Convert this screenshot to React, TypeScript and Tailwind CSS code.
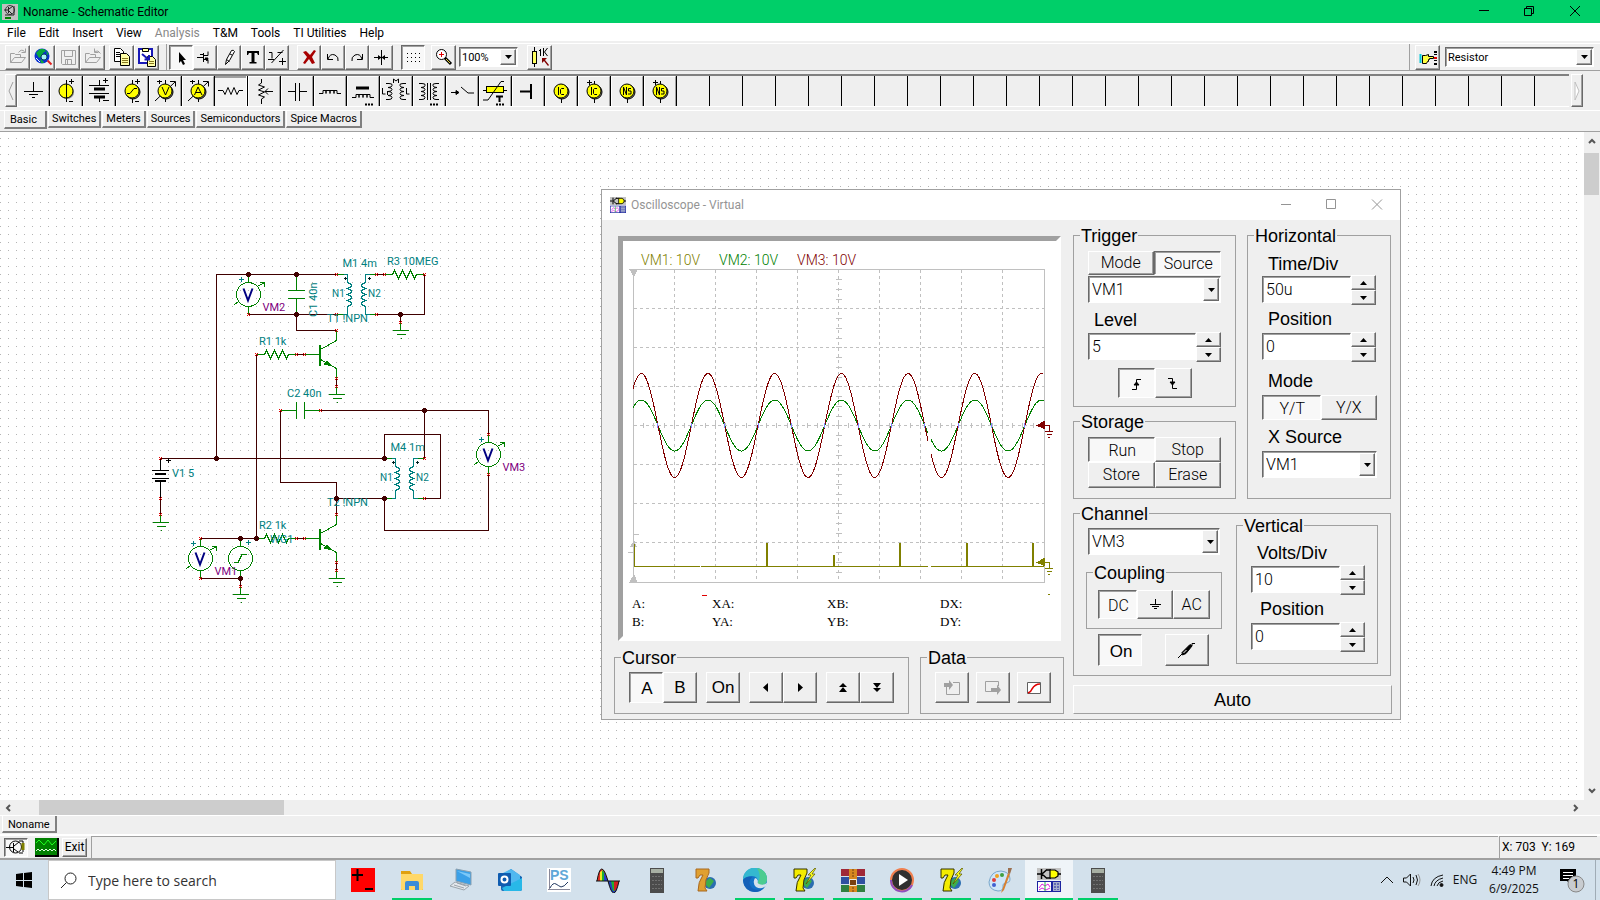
import React, { useState } from "react";
import clsx from "clsx";

const RAISED =
  "border border-t-white border-l-white border-b-[#696969] border-r-[#696969] bg-[#efefef] shadow-[inset_-1px_-1px_0_#a0a0a0]";
const PRESSED =
  "border border-t-[#696969] border-l-[#696969] border-b-white border-r-white bg-[#f8f8f8] shadow-[inset_1px_1px_0_#a0a0a0]";
const SUNKEN =
  "border border-t-[#696969] border-l-[#696969] border-b-white border-r-white bg-white shadow-[inset_1px_1px_0_#a0a0a0]";

/* ---------- main toolbar ---------- */

type Tool = { name: string; icon: React.ReactNode; pressed?: boolean };

const OpenIcon = ({ arrow }: { arrow: string }) => (
  <g fill="none" stroke="#a0a0a0">
    <path d="M4.500 17.500V8.500h4l1 1h5v3M4.500 17.500l4-5h11l-4 5z" />
    <path d={arrow} />
  </g>
);

const fileTools: Tool[] = [
  { name: "Open", icon: <OpenIcon arrow="M12.500 7.500q3-4 6-1M19.500 3.500v4h-4" /> },
  {
    name: "Open from web",
    icon: (
      <g>
        <circle cx="11" cy="11" r="7.500" fill="#0a30d0" />
        <path d="M5 8l4-4 4 0 2 2-3 2-1 3-3 2zM9 14l3 2 1 2-3 0zM15 5l3 4-2 1z" fill="#08a83c" />
        <circle cx="13" cy="12" r="3" fill="#a8f0f4" stroke="#0a4060" />
        <path d="M5 13l4 4" stroke="#e8f4ff" />
        <path d="M16.500 15.500l4 4" stroke="#e02020" strokeWidth="2" />
      </g>
    ),
  },
  {
    name: "Save",
    icon: (
      <g fill="none" stroke="#a0a0a0">
        <path d="M5.500 5.500h14v14h-13l-1-1zM8.500 5.500v6h8v-6M9.500 19.500v-5h6v5M11.500 15v4" />
      </g>
    ),
  },
  { name: "Close", icon: <OpenIcon arrow="M19.500 8.500q-2-4-6-2M13.500 3.500v4h4" /> },
];

const clipTools: Tool[] = [
  {
    name: "Copy",
    icon: (
      <g>
        <path d="M4.500 3.500h6l3 3v10h-9z" fill="#fff" stroke="#000" />
        <path d="M6 7.500h4M6 9.500h5M6 11.500h4" stroke="#000" />
        <path d="M10.500 8.500h6l3 3v9h-9z" fill="#ffffa8" stroke="#000" />
        <path d="M12 13.500h6M12 15.500h6M12 17.500h6" stroke="#8a7a20" />
      </g>
    ),
  },
  {
    name: "Paste",
    icon: (
      <g>
        <path d="M4 4h13v14H4z" fill="#fff" stroke="#1818b8" strokeWidth="2" />
        <path d="M7.500 3.500h6v3h-6z" fill="#ffffa8" stroke="#000" />
        <path d="M12.500 11.500h5l3 3v7h-8z" fill="#ffffa8" stroke="#000" />
        <path d="M14 16.500h5M14 18.500h5" stroke="#8a7a20" />
        <path d="M7 9l6 5M14 10v4.500h-4.500" fill="none" stroke="#1818b8" strokeWidth="2" />
      </g>
    ),
  },
];

const drawTools: Tool[] = [
  {
    name: "Select",
    pressed: true,
    icon: <path d="M10 7v11l2-2 2 4 2-1-2-4h3z" fill="#000" />,
  },
  {
    name: "Last component",
    icon: (
      <g fill="none" stroke="#000">
        <path d="M4 12.500h6M7 9.500h3M10.500 8v9M11 10.500h4v-4M11 14.500h4v4" />
        <path d="M12 13l3 0-1 3z" fill="#000" />
      </g>
    ),
  },
  {
    name: "Wire",
    icon: <path d="M8.500 19.500l1-5 5-9q2-1 3 1l-5 9zM9.500 14.500l3 2M13 9l2 1" fill="#fff" stroke="#000" />,
  },
  {
    name: "Text",
    icon: <path d="M6 6h12v4h-1l-1-2h-2.500v9h2v1.500h-7V17h2V8H8l-1 2H6z" fill="#000" />,
  },
  {
    name: "Output",
    icon: <path d="M4 7.500h3v6M18.500 5l-12 13M12.500 7.500h5M14 16.500h7M17.500 13v7M3 14.500h6" fill="none" stroke="#000" />,
  },
];

const editTools: Tool[] = [
  {
    name: "Delete",
    icon: <path d="M6 7l3-1 4 4 4-5 2 1-4 6 3 6-3 1-3-5-4 5-2-1 4-6z" fill="#a80000" />,
  },
  {
    name: "Undo",
    icon: <path d="M6.500 9v5.500h5.500M7 14q2-6 7-4 4 2 3 6" fill="none" stroke="#000" />,
  },
  {
    name: "Redo",
    icon: <path d="M17.500 9v5.500h-5.500M17 14q-2-6-7-4-4 2-3 6" fill="none" stroke="#000" />,
  },
  {
    name: "Center",
    icon: (
      <g>
        <path d="M5 12.500h14M12.500 5v15" stroke="#000" />
        <path d="M9 10v5l3.500-2.500zM16 10v5l-3.500-2.500z" fill="#000" />
      </g>
    ),
  },
];

const gridTool: Tool = {
  name: "Grid",
  pressed: true,
  icon: (
    <g fill="none" stroke="#000" strokeDasharray="1 3">
      <path d="M6 8.500h15M6 12.500h15M6 16.500h15" />
    </g>
  ),
};

const zoomTool: Tool = {
  name: "Zoom in",
  icon: (
    <g>
      <circle cx="9.500" cy="9.500" r="5" fill="#fff" stroke="#000" />
      <path d="M9.500 7v5M7 9.500h5" stroke="#e00000" />
      <path d="M13 13l6 6" stroke="#000" strokeWidth="3" />
      <path d="M14 14l4 4" stroke="#e8d840" />
    </g>
  ),
};

const valueTool: Tool = {
  name: "Show values",
  icon: (
    <g>
      <path d="M6.500 2v20" stroke="#000" />
      <rect x="4.500" y="6.500" width="4" height="12" fill="#ffff60" stroke="#000" />
      <path d="M12.500 4v7M11 5.500h1M15.500 3v8M19.500 3l-3 4 3 4" fill="none" stroke="#000" />
      <path d="M14 13h5l-2 2 4 5-1 1-4-5-2 2z" fill="#800000" />
    </g>
  ),
};

const handTool: Tool = {
  name: "Component pointer",
  icon: (
    <g>
      <path d="M4.500 9v9" stroke="#00c8d8" strokeWidth="2" />
      <path d="M6.500 10.500h3l3-1v2h5v2h-4v1h-1v2h-1l-1 2h-4z" fill="#ffff40" stroke="#000" />
      <path d="M18 6h3v2h-3zM18 18h3v2h-3zM18 9h3v1h-3zM18 15h3v1h-3z" fill="#000" />
      <path d="M18 12h3v2h-3z" fill="#e00000" />
    </g>
  ),
};

const ToolButton = ({ tool, wide }: { tool: Tool; wide?: boolean }) => (
  <button
    aria-label={tool.name}
    className={clsx("flex h-[25px] items-center justify-center", wide ? "w-[25px]" : "w-6", tool.pressed ? PRESSED : RAISED)}
  >
    <svg width="22" height="22" viewBox="1 1 22 22" className="shrink-0">
      {tool.icon}
    </svg>
  </button>
);

/* ---------- component bar ---------- */

const Ball = ({ children, y = 15 }: { children?: React.ReactNode; y?: number }) => (
  <g>
    <circle cx="17" cy={y + 1} r="7" fill="#888" />
    <circle cx="16" cy={y} r="7" fill="#ffff00" stroke="#000" />
    {children}
  </g>
);

const Meter = ({ d }: { d: string }) => (
  <g fill="none" stroke="#000">
    <path d="M16.500 4v4M16.500 22v4M6 25l20-19M21 5.500h5.500v5M8 5.500h5M10.500 4v4" />
    <Ball>
      <path d={d} />
    </Ball>
  </g>
);

const MarkBall = ({ d, plus }: { d: string; plus?: boolean }) => (
  <g fill="none" stroke="#000">
    <path d="M16.500 20v7" />
    {plus && <path d="M16.500 5v4M9 6.500h5M11.500 4v5" />}
    <Ball>
      <path d={d} />
    </Ball>
  </g>
);

const components: { name: string; icon: React.ReactNode }[] = [
  { name: "Ground", icon: <path d="M16.500 6v9M7 15.500h19M12 18.500h9M15 21.500h3" stroke="#000" fill="none" /> },
  {
    name: "Current source",
    icon: (
      <g>
        <Ball />
        <path d="M16.500 4v22M19 5.500h5M21.500 3v5M19 25.500h4" stroke="#000" fill="none" />
      </g>
    ),
  },
  {
    name: "Battery",
    icon: (
      <g stroke="#000" fill="none">
        <path d="M16.500 4v5M6 9.500h20M6 17.500h20M16.500 21v5M20 4.500h5M22.500 2v5M20 24.500h6" />
        <path d="M11 13h11M11 21h11" strokeWidth="3" />
      </g>
    ),
  },
  {
    name: "Voltage generator",
    icon: (
      <g stroke="#000" fill="none">
        <path d="M16.500 4v4M16.500 22v5M19 5.500h5M21.500 3v5M19 25.500h4" />
        <Ball>
          <path d="M11 17.500h3l4-5h3" />
        </Ball>
      </g>
    ),
  },
  { name: "Voltmeter", icon: <Meter d="M13 11l3.500 8L20 11" /> },
  { name: "Ammeter", icon: <Meter d="M12.500 19l3.500-8 4 8M14 16.500h5" /> },
  { name: "Resistor", icon: <path d="M4 15.500h5l2 4 3-7 3 7 3-7 3 7 2-4h4" stroke="#000" fill="none" /> },
  { name: "Potentiometer", icon: <path d="M13.500 3v4l-3 2 6 2-6 3 6 2-6 3 6 2-3 2v5M25 15.500h-8M20 12.500l-3 3 3 3" stroke="#000" fill="none" /> },
  { name: "Capacitor", icon: <path d="M7 15.500h7M14.500 7v18M18.500 7v18M19 15.500h7" stroke="#000" fill="none" /> },
  { name: "Inductor", icon: <path d="M5 17.500h4v-3h3v3v-3h4v3v-3h4v3v-3h3v3h4" stroke="#000" fill="none" /> },
  {
    name: "Iron core coil",
    icon: (
      <g stroke="#000" fill="none">
        <path d="M5 21.500h4v-3h3v3v-3h4v3v-3h4v3v-3h3v3h4" />
        <path d="M18 28.500h8" strokeDasharray="2 1" strokeWidth="2" />
        <path d="M9 12h13" strokeWidth="3" />
      </g>
    ),
  },
  {
    name: "Coupled inductors",
    icon: (
      <g stroke="#000" fill="none">
        <path d="M6 7.500h3q4 0 3 2 0 2-4 2 4 0 4 2t-4 2q4 0 4 2t-4 2q4 0 4 2t-3 2H6" />
        <path d="M26 7.500h-3q-4 0-3 2 0 2 4 2-4 0-4 2t4 2q-4 0-4 2t4 2q-4 0-4 2t3 2h3" />
        <path d="M13.500 7V3l2.500 2 2.500-2v4M2.500 12v6h3M26.500 12v6h3M7.500 15v4" />
      </g>
    ),
  },
  {
    name: "Transformer",
    icon: (
      <g stroke="#000" fill="none">
        <path d="M6 7.500h3q4 0 3 2 0 2-4 2 4 0 4 2t-4 2q4 0 4 2t-4 2q4 0 4 2t-3 2H6" />
        <path d="M26 7.500h-3q-4 0-3 2 0 2 4 2-4 0-4 2t4 2q-4 0-4 2t4 2q-4 0-4 2t3 2h3M14.500 7v17M17.500 7v17" />
        <path d="M17 28.500h8" strokeDasharray="2 1" strokeWidth="2" />
      </g>
    ),
  },
  {
    name: "Switch",
    icon: (
      <g stroke="#000" fill="none">
        <path d="M5 16.500h7M15 11l7 6h6" />
        <path d="M10 14.500l3 2-3 2z" fill="#000" />
      </g>
    ),
  },
  {
    name: "Thermistor",
    icon: (
      <g stroke="#000" fill="none">
        <path d="M4 14.500h24" />
        <rect x="7.500" y="10.500" width="17" height="6" fill="#ffff00" />
        <path d="M4 24h5L22 5.500h3" />
        <path d="M17 20.500h7M20.500 20v6" strokeWidth="2" />
        <path d="M17 28.500h8" strokeDasharray="2 1" strokeWidth="2" />
      </g>
    ),
  },
  { name: "Terminal", icon: <path d="M8 15.500h10M19 8v15" stroke="#000" strokeWidth="2" fill="none" /> },
  { name: "Initial condition", icon: <MarkBall d="M13.500 11v8M19 12.500h-2.500l-1 1v4l1 1H19" /> },
  { name: "Initial condition +", icon: <MarkBall plus d="M13.500 11v8M19 12.500h-2.500l-1 1v4l1 1H19" /> },
  { name: "Nodeset", icon: <MarkBall d="M12.500 19v-8l3 8v-8M20 12.500h-2.500v2.500h2.500v3h-3" /> },
  { name: "Nodeset +", icon: <MarkBall plus d="M12.500 19v-8l3 8v-8M20 12.500h-2.500v2.500h2.500v3h-3" /> },
];

const componentTabs = ["Basic", "Switches", "Meters", "Sources", "Semiconductors", "Spice Macros"];

/* ---------- schematic parts ---------- */

const WIRE = "#400000";
const GREEN = "#008000";
const TEAL = "#008080";

const Pin = ({ x, y }: { x: number; y: number }) => (
  <path d={`M${x - 1.5} ${y - 1.5}l3 3m0-3l-3 3`} stroke="#e00000" />
);

const Node = ({ x, y }: { x: number; y: number }) => <circle cx={x} cy={y} r="2.500" fill={WIRE} />;

const Ground = ({ x, y }: { x: number; y: number }) => (
  <g>
    <path d={`M${x} ${y}v8M${x - 8} ${y + 8}h16M${x - 4} ${y + 12}h9M${x} ${y + 16}h1`} stroke={GREEN} />
    <Pin x={x} y={y} />
  </g>
);

const Voltmeter = ({ x, y, name }: { x: number; y: number; name: string }) => (
  <g>
    <path
      d={`M${x} ${y}v8M${x} ${y + 32}v8M${x + 9} ${y + 12}l7-4M${x + 11} ${y + 8}h5v4M${x - 14} ${y + 30}l4-3`}
      stroke={GREEN}
    />
    <circle cx={x} cy={y + 20} r="12" stroke={GREEN} fill="none" />
    <path d={`M${x - 10} ${y + 5}h5M${x - 7.5} ${y + 2.5}v5`} stroke={TEAL} />
    <path d={`M${x - 5} ${y + 14}l4.500 12 4.500-12`} stroke="#000080" strokeWidth="2" fill="none" shapeRendering="auto" />
    <text x={x + 14} y={y + 36} fill="#800080">{name}</text>
    <Pin x={x} y={y + 40} />
  </g>
);

const Transistor = ({ x, y, name }: { x: number; y: number; name: string }) => (
  <g>
    <path d={`M${x} ${y}v10l-16 9M${x - 32} ${y + 24}h16M${x - 16} ${y + 29}l16 9v10`} stroke={GREEN} fill="none" />
    <path d={`M${x - 16.5} ${y + 14}v21`} stroke={GREEN} strokeWidth="2" />
    <path d={`M${x - 4} ${y + 36}l-6-6-3 4z`} fill={GREEN} />
    <path d={`M${x} ${y + 48}v8`} stroke={WIRE} />
    <text x={x - 9.5} y={y - 9} fill={TEAL}>{name}</text>
    <Pin x={x} y={y} />
    <Pin x={x} y={y + 48} />
    <Ground x={x} y={y + 56} />
  </g>
);

const Resistor = ({ x, y }: { x: number; y: number }) => (
  <g>
    <path
      d={`M${x} ${y}h8l2-4 4 8 4-8 4 8 4-8 4 8 2-4h8`}
      stroke={GREEN}
      fill="none"
    />
    <Pin x={x} y={y} />
    <Pin x={x + 40} y={y} />
  </g>
);

const Coupled = ({ x, y, name }: { x: number; y: number; name: string }) => (
  <g fill="none">
    <path d={`M${x} ${y}h7M${x} ${y + 40}h7M${x + 33} ${y}h7M${x + 33} ${y + 40}h7`} stroke={GREEN} />
    <path d={`M${x + 7} ${y}h4v8l4 2v2l-4 2 4 2v2l-4 2 4 2v2l-4 2 4 2v2l-4 2v8h-4`} stroke={TEAL} />
    <path d={`M${x + 33} ${y}h-4v8l-4 2v2l4 2-4 2v2l4 2-4 2v2l4 2-4 2v2l4 2v8h4`} stroke={TEAL} />
    <path d={`M${x + 7} ${y + 4}h3M${x + 8.500} ${y + 2.500}v3M${x + 31} ${y + 4}h3M${x + 32.500} ${y + 2.500}v3`} stroke="#002020" />
    <g fill={TEAL}>
      <text x={x + 6} y={y - 8}>{name}</text>
      <text x={x - 4.5} y={y + 22.5} fontSize="10">N1</text>
      <text x={x + 31.5} y={y + 22.5} fontSize="10">N2</text>
    </g>
    <Pin x={x} y={y} />
    <Pin x={x} y={y + 40} />
    <Pin x={x + 40} y={y} />
    <Pin x={x + 40} y={y + 40} />
  </g>
);

const Schematic = () => (
  <svg
    width="560"
    height="480"
    viewBox="0 132 560 480"
    fill="none"
    fontFamily="Roboto, sans-serif"
    fontSize="11"
    shapeRendering="crispEdges"
  >
    <g stroke={WIRE}>
      <path d="M160.500 458.500h224M216.500 458.500v-184h120M248.500 314.500h88M296.500 314.500v16h40" />
      <path d="M376.500 274.500h8M424.500 274.500v40h-48M400.500 314.500v8" />
      <path d="M256.500 538.500v-184M296.500 354.500h8M296.500 538.500h8" />
      <path d="M320.500 410.500h168v24M424.500 410.500v48M280.500 410.500v72h56v32" />
      <path d="M384.500 458.500v-24h56v64h-16M336.500 498.500h48v32h104v-56" />
      <path d="M200.500 538.500h56M200.500 578.500h40v8M160.500 498.500v16" />
    </g>

    <Voltmeter x={248.5} y={274.5} name="VM2" />
    <Voltmeter x={488.5} y={434.5} name="VM3" />
    <Voltmeter x={200.5} y={538.5} name="VM1" />
    <Pin x={488.5} y={434.5} />
    <Pin x={200.5} y={538.5} />
    <Coupled x={336.5} y={274.5} name="M1 4m" />
    <Coupled x={384.5} y={458.5} name="M4 1m" />
    <Transistor x={336.5} y={330.5} name="T1 !NPN" />
    <Transistor x={336.5} y={514.5} name="T2 !NPN" />
    <Resistor x={256.5} y={354.5} />
    <Resistor x={256.5} y={538.5} />
    <Resistor x={384.5} y={274.5} />
    <Pin x={304.5} y={354.5} />
    <Pin x={304.5} y={538.5} />
    <Ground x={400.5} y={322.5} />
    <Ground x={160.5} y={514.5} />
    <Ground x={240.5} y={586.5} />

    {/* capacitors */}
    <path d="M296.500 274.500v16M288 290.500h17M288 298.500h17M296.500 298.500v16" stroke={GREEN} />
    <path d="M280.500 410.500h16M296.500 402v17M304.500 402v17M304.500 410.500h16" stroke={GREEN} />
    <Pin x={280.5} y={410.5} />
    <Pin x={320.5} y={410.5} />

    {/* battery */}
    <g stroke="#000">
      <path d="M160.500 458.500v12M152 470.500h17M152 478.500h17M160.500 482v17M166 460.500h5M168.500 458v5" />
      <path d="M155 474h11M155 481h11" strokeWidth="2" />
    </g>
    <Pin x={160.5} y={458.5} />
    <Pin x={160.5} y={498.5} />

    {/* generator */}
    <circle cx="240.500" cy="558.500" r="12" stroke={GREEN} />
    <path d="M240.500 538.500v8M240.500 570.500v8M234 562.500h4l4-8h5" stroke={GREEN} />
    <path d="M246 542.500h5M248.500 540v5" stroke={TEAL} />

    <Node x={248.5} y={274.5} />
    <Node x={296.5} y={274.5} />
    <Node x={296.5} y={314.5} />
    <Node x={400.5} y={314.5} />
    <Node x={424.5} y={410.5} />
    <Node x={216.5} y={458.5} />
    <Node x={384.5} y={458.5} />
    <Node x={384.5} y={498.5} />
    <Node x={336.5} y={498.5} />
    <Node x={240.5} y={538.5} />
    <Node x={256.5} y={538.5} />
    <Node x={240.5} y={578.5} />

    <g fill={TEAL}>
      <text x="387" y="265">R3 10MEG</text>
      <text x="259" y="345">R1 1k</text>
      <text x="259" y="529">R2 1k</text>
      <text x="287" y="397">C2 40n</text>
      <text x="172" y="477">V1 5</text>
      <text x="270" y="543">WG1</text>
      <text transform="translate(317 317) rotate(-90)">C1 40n</text>
    </g>
  </svg>
);

/* ---------- oscilloscope ---------- */

const PERIOD = 66.7;

const sine = (from: number, to: number, amp: number) => {
  const pts: string[] = [];
  for (let x = from; x <= to; x++) {
    const y = 425.5 - amp * Math.cos(((x - 641.3) / PERIOD) * 2 * Math.PI);
    pts.push(`${x} ${y.toFixed(1)}`);
  }
  return "M" + pts.join("L");
};

const zeroCrossings = Array.from({ length: 12 }, (_, i) => 641.3 + PERIOD / 4 + (i * PERIOD) / 2);

const Trace = () => (
  <svg width="433" height="345" viewBox="623 267 433 345" fill="none" shapeRendering="crispEdges" className="block">
    <g stroke="#c0c0c0">
      <path d="M633.500 269.500h411v312.500h-411z" />
      <g strokeDasharray="3 3">
        {Array.from({ length: 9 }, (_, i) => (
          <path key={i} d={`M${674.5 + i * 41} 270v312`} />
        ))}
        {Array.from({ length: 7 }, (_, i) => (
          <path key={i} d={`M634 ${308.5 + i * 39}h410`} />
        ))}
      </g>
      {Array.from({ length: 31 }, (_, i) => (
        <path key={i} d={`M836 ${Math.round(279 + i * 9.75) + 0.5}h6`} />
      ))}
      {Array.from({ length: 39 }, (_, i) => (
        <path key={i} d={`M${Math.round(643 + i * 10.25) + 0.5} 423v5`} />
      ))}
      <path d="M634 534.500h5M628 552.500h5" />
    </g>
    <path d="M629 269h9l-4 8zM629 583h9l-4-9zM630 547h7l-3-7z" fill="#c0c0c0" />

    <path d={sine(633, 928, 25.5) + sine(931, 1044, 25.5)} stroke="#008000" />
    <path d={sine(633, 928, 52) + sine(931, 1043, 52)} stroke="#800000" />
    {zeroCrossings.map((x) => (
      <path key={x} d={`M${x} 422.500v5`} stroke="#8080ff" />
    ))}

    <path d="M634.500 543.500v23h65M701 566.500h227M931 566.500h113" stroke="#808000" />
    <path d="M767 543v23M834 555v11M900 543v23M967 543v23M1033 543v23" stroke="#808000" strokeWidth="2" />

    {/* ground level markers */}
    <path d="M1036 425.500l9-5v9z" fill="#800000" />
    <path d="M1045 425.500h4.500v6M1045 431.500h8M1047 434.500h5M1048 437.500h2" stroke="#800000" />
    <path d="M1036 562.500l9-5v9z" fill="#808000" />
    <path d="M1045 562.500h4.500v6M1045 568.500h8M1047 571.500h5M1048 574.500h2M1048 594.500h2" stroke="#808000" />
    <path d="M702 595.500h5" stroke="#e00000" />
  </svg>
);

const readouts = [
  ["A:", "B:"],
  ["XA:", "YA:"],
  ["XB:", "YB:"],
  ["DX:", "DY:"],
];

const Group = ({ title, className, body, children }: { title: string; className?: string; body?: string; children: React.ReactNode }) => (
  <fieldset className={clsx("border border-[#a0a0a0]", className)}>
    <legend className="ml-[6px] px-px pt-[2px] text-[18px] leading-5">{title}</legend>
    <div className={body}>{children}</div>
  </fieldset>
);

const Push = ({ on, className, children, label, onClick }: { on?: boolean; className: string; children: React.ReactNode; label?: string; onClick?: () => void }) => (
  <button
    onClick={onClick}
    aria-label={label}
    className={clsx("flex items-center justify-center leading-none", className, on ? clsx(PRESSED, "pl-[2px] pt-[2px]") : RAISED)}
  >
    {children}
  </button>
);

const Combo = ({ label, value, options, className, size = "h-[27px] pl-[3px] font-['Roboto',sans-serif] text-[16px] font-light" }: { label: string; value: string; options: string[]; className?: string; size?: string }) => (
  <div className={clsx("relative", className)}>
    <select
      aria-label={label}
      defaultValue={value}
      className={clsx("block w-full appearance-none rounded-none text-black outline-none", SUNKEN, size)}
    >
      {options.map((o) => (
        <option key={o}>{o}</option>
      ))}
    </select>
    <span className={clsx("pointer-events-none absolute inset-y-[2px] right-[2px] flex w-4 items-center justify-center", RAISED)}>
      <svg width="7" height="4" viewBox="0 0 7 4">
        <path d="M0 0h7L3.500 4z" />
      </svg>
    </span>
  </div>
);

const Spinner = ({ id, label, value, labelClass, width }: { id: string; label: string; value: string; labelClass: string; width: string }) => (
  <>
    <label htmlFor={id} className={clsx("block text-[18px] leading-[22px]", labelClass)}>
      {label}
    </label>
    <div className="flex h-[30px]">
      <input
        id={id}
        defaultValue={value}
        className={clsx("mb-[2px] mt-px h-[27px] pl-[3px] font-['Roboto',sans-serif] text-[16px] font-light outline-none", SUNKEN, width)}
      />
      <div className="flex w-[25px] flex-col">
        <Push className="flex-1" label={label + " up"}>
          <svg width="7" height="4" viewBox="0 0 7 4"><path d="M0 4h7L3.500 0z" /></svg>
        </Push>
        <Push className="flex-1" label={label + " down"}>
          <svg width="7" height="4" viewBox="0 0 7 4"><path d="M0 0h7L3.500 4z" /></svg>
        </Push>
      </div>
    </div>
  </>
);

const ScopeIcon = ({ size }: { size: number }) => (
  <svg width={size} height={size} viewBox="0 0 24 24">
    <path d="M0 0h24v12H0z" fill="#c4c4c4" />
    <path d="M0 6h4M4.500 1v10M5 6l5-4.500M5 6l5 4.500M9 2h5M9 10h5M21 6h3" stroke="#000" strokeWidth="1.500" fill="none" />
    <path d="M13 2h5l3 2v4l-3 2h-5z" fill="#ffff00" stroke="#000" strokeWidth="1.200" />
    <path d="M0 13h24v11H0z" fill="#1c24a0" />
    <path d="M1 14h13v9H1z" fill="#fff" />
    <path d="M2 20l3-4 3 2 3-2 2 3M2 22l3-2 4 2 4-2" stroke="#e020e0" fill="none" />
    <path d="M8 14v9" stroke="#20c040" />
    <path d="M16 14h7v9h-7z" fill="#a8b0cc" />
    <path d="M18 15v7M21 15v7" stroke="#1c24a0" strokeDasharray="2 1" />
  </svg>
);

const channels = ["VM1", "VM2", "VM3"];

const Oscilloscope = () => {
  const [cursor, setCursor] = useState("A");
  const [running, setRunning] = useState(true);

  return (
    <section className="absolute left-[601px] top-[57px] w-[800px] border border-[#a0a0a0] bg-[#efefef] text-black">
      <header className="flex h-[30px] items-center bg-white pl-2 pr-[5px] font-['Roboto',sans-serif] text-[12px] text-[#949494]">
        <ScopeIcon size={16} />
        <h2 className="ml-[5px] flex-1">Oscilloscope - Virtual</h2>
        <svg width="122" height="12" viewBox="0 0 122 12" fill="none" stroke="#949494">
          <path d="M8 5.500h10M53.500 .5h9v9h-9zM99 .5l10 10M109 .5l-10 10" />
        </svg>
      </header>

      <div className="flex gap-[9px] pb-[5px] pl-3 pr-2">
        <div className="w-[450px] pt-4">
          <div className="mx-1 h-[405px] w-[443px] border-[5px] border-b-white border-l-[#a0a0a0] border-r-white border-t-[#a0a0a0] bg-white">
            <div className="flex h-[26px] items-end gap-[19px] pl-[18px] font-['Roboto',sans-serif] text-[14px] font-light leading-[14px]">
              <span className="text-[#808000]">VM1: 10V</span>
              <span className="text-[#008000]">VM2: 10V</span>
              <span className="text-[#800000]">VM3: 10V</span>
            </div>
            <div className="h-[328px]">
              <Trace />
            </div>
            <div className="grid grid-cols-[80px_115px_113px_1fr] pl-[9px] font-['Liberation_Serif',serif] text-[13px] leading-[18px]">
              {readouts.map(([a, b]) => (
                <div key={a}>
                  <p>{a}</p>
                  <p>{b}</p>
                </div>
              ))}
            </div>
          </div>

          <div className="mt-[5px] flex gap-[11px] text-[17px]">
            <Group title="Cursor" className="w-[295px]" body="flex h-[45px] pl-[14px] pt-1">
              <Push className="h-[31px] w-[34px]" on={cursor === "A"} onClick={() => setCursor("A")}>A</Push>
              <Push className="h-[31px] w-[34px]" on={cursor === "B"} onClick={() => setCursor("B")}>B</Push>
              <Push className="ml-[9px] h-[31px] w-[34px]">On</Push>
              <Push className="ml-[9px] h-[31px] w-[34px]" label="Cursor left">
                <svg width="6" height="9" viewBox="0 0 6 9"><path d="M5 0v9L0 4.500z" /></svg>
              </Push>
              <Push className="h-[31px] w-[34px]" label="Cursor right">
                <svg width="6" height="9" viewBox="0 0 6 9"><path d="M1 0v9l5-4.500z" /></svg>
              </Push>
              <Push className="ml-[9px] h-[31px] w-[34px]" label="Cursor up">
                <svg width="8" height="9" viewBox="0 0 8 9"><path d="M0 4l4-4 4 4zM0 9l4-5 4 5z" /></svg>
              </Push>
              <Push className="h-[31px] w-[34px]" label="Cursor down">
                <svg width="8" height="9" viewBox="0 0 8 9"><path d="M0 0h8L4 5zM0 5h8L4 9z" /></svg>
              </Push>
            </Group>
            <Group title="Data" className="w-[144px]" body="flex h-[45px] gap-[7px] pl-[14px] pt-1">
              <Push className="h-[31px] w-[34px]" label="Import data">
                <svg width="18" height="16" viewBox="0 0 18 16">
                  <path d="M3.500 7v7.500h13v-12H10" fill="none" stroke="#a0a0a0" />
                  <path d="M1 3h5V0l4 5-4 5V7H1z" fill="#a0a0a0" />
                </svg>
              </Push>
              <Push className="h-[31px] w-[34px]" label="Export data">
                <svg width="18" height="16" viewBox="0 0 18 16">
                  <path d="M9 11.500H1.500v-10h13V6" fill="none" stroke="#a0a0a0" />
                  <path d="M7 8h6V4.500l4 5.500-4 5v-3H7z" fill="#a0a0a0" />
                </svg>
              </Push>
              <Push className="h-[31px] w-[34px]" label="Draw curve">
                <svg width="16" height="14" viewBox="0 0 16 14">
                  <path d="M1.500 1.500h13v11h-13z" fill="#fff" stroke="#606060" />
                  <path d="M2 12q3-1 4-4 3-5 8-5" fill="none" stroke="#e00000" strokeWidth="1.500" />
                </svg>
              </Push>
            </Group>
          </div>
        </div>

        <div className="flex-1 pt-1">
          <div className="flex gap-[11px]">
            <div className="w-[163px]">
              <Group title="Trigger" body="px-[14px] pb-2 pt-[5px]">
                <div className="flex font-['Roboto',sans-serif] text-[16px] font-light">
                  <Push className="h-6 flex-1">Mode</Push>
                  <Push className="h-6 flex-1" on>Source</Push>
                </div>
                <Combo label="Trigger source" value="VM1" options={channels} className="mt-px" />
                <Spinner id="level" label="Level" value="5" labelClass="ml-[6px] mt-[6px] mb-px" width="w-[108px]" />
                <div className="mt-[6px] flex justify-center">
                  <Push className="h-[30px] w-[37px]" label="Rising edge" on>
                    <svg width="10" height="13" viewBox="0 0 10 13" fill="none" stroke="#000">
                      <path d="M0 11.500h4.500v-10H9" /><path d="M2 7h5L4.500 4z" fill="#000" />
                    </svg>
                  </Push>
                  <Push className="h-[30px] w-[37px]" label="Falling edge">
                    <svg width="10" height="13" viewBox="0 0 10 13" fill="none" stroke="#000">
                      <path d="M0 1.500h4.500v10H9" /><path d="M2 5h5L4.500 8z" fill="#000" />
                    </svg>
                  </Push>
                </div>
              </Group>
              <Group title="Storage" className="mt-[3px]" body="grid grid-cols-2 px-[14px] pb-[10px] pt-[5px] font-['Roboto',sans-serif] text-[16px] font-light">
                <Push className="h-[25px]" on={running} onClick={() => setRunning(true)}>Run</Push>
                <Push className="h-[25px]" on={!running} onClick={() => setRunning(false)}>Stop</Push>
                <Push className="h-[26px]">Store</Push>
                <Push className="h-[26px]">Erase</Push>
              </Group>
            </div>

            <Group title="Horizontal" className="w-[144px]" body="pl-[14px] pr-[13px] pt-[7px]">
              <Spinner id="time-div" label="Time/Div" value="50u" labelClass="ml-[6px]" width="w-[89px]" />
              <Spinner id="h-position" label="Position" value="0" labelClass="ml-[6px] mt-[3px] mb-[2px]" width="w-[89px]" />
              <p className="ml-[6px] mt-2 text-[18px] leading-[22px]">Mode</p>
              <div className="mt-[3px] flex font-['Roboto',sans-serif] text-[16px] font-light">
                <Push className="h-[25px] flex-1" on>Y/T</Push>
                <Push className="h-[25px] flex-1">Y/X</Push>
              </div>
              <p className="ml-[6px] mt-[6px] text-[18px] leading-[22px]">X Source</p>
              <Combo label="X Source" value="VM1" options={channels} className="mt-[3px]" />
            </Group>
          </div>

          <Group title="Channel" className="mt-[3px] w-[318px]" body="flex justify-between pb-[9px] pl-3 pr-3">
            <div className="w-[136px] pt-1">
              <Combo label="Channel" value="VM3" options={channels} className="mx-[2px]" />
              <Group title="Coupling" className="mt-[6px]" body="flex px-[11px] pb-[9px] pt-[7px] font-['Roboto',sans-serif] text-[16px] font-light">
                <Push className="h-[29px] flex-1" on>DC</Push>
                <Push className="h-[29px] flex-1" label="Ground">
                  <svg width="11" height="11" viewBox="0 0 11 11" stroke="#000">
                    <path d="M5.500 0v5M0 5.500h11M2 7.500h7M4 9.500h3" />
                  </svg>
                </Push>
                <Push className="h-[29px] flex-1">AC</Push>
              </Group>
              <div className="mt-[5px] flex justify-between pl-3 pr-[13px] text-[17px]">
                <Push className="h-8 w-11" on>On</Push>
                <Push className="h-8 w-11" label="Probe">
                  <svg width="20" height="17" viewBox="0 0 20 17" fill="none" stroke="#000">
                    <path d="M1 16l4-4M15 4V1.500h3" />
                    <path d="M5 10.500L13 2.500l2 1.500-6 7.500L5.500 13z" fill="#000" />
                    <path d="M6.500 11l3-3" stroke="#fff" />
                  </svg>
                </Push>
              </div>
            </div>
            <Group title="Vertical" className="-mt-[10px] w-[142px] self-start" body="pb-[11px] pl-[14px] pt-[6px]">
              <Spinner id="volts-div" label="Volts/Div" value="10" labelClass="ml-[6px] mb-px" width="w-[89px]" />
              <Spinner id="v-position" label="Position" value="0" labelClass="ml-[9px] mt-[3px] mb-[2px]" width="w-[89px]" />
            </Group>
          </Group>

          <button className="mt-[9px] h-[29px] w-full border border-b-[#a0a0a0] border-l-white border-r-[#a0a0a0] border-t-white text-[18px] leading-none">
            Auto
          </button>
        </div>
      </div>
    </section>
  );
};

/* ---------- taskbar ---------- */

const TinaSeven = ({ bolt }: { bolt?: boolean }) => (
  <g>
    <circle cx="16" cy="15" r="6" fill="#2a6db0" />
    <path d="M12 13l4-3 4 3-2 3-3 4-3-3z" fill="#3cae4c" />
    <path
      d="M2 1h13v4q-4 6-4 15l2 3H4q0-9 5-16H6l-2 3H2z"
      fill={bolt ? "#f4ec00" : "#e0a030"}
      stroke={bolt ? "#303000" : "#a86820"}
    />
    {bolt && <path d="M23 0l-7 7h3l-5 9 9-10h-3l4-6z" fill="#ffff20" stroke="#505000" strokeWidth=".7" />}
  </g>
);

const Calculator = () => (
  <g>
    <path d="M5 0h14v25H5z" fill="#4c4c4c" />
    <path d="M6 1h12v4H6z" fill="#a8b0a4" />
    <path d="M7 8.500h10M7 12.500h10M7 16.500h10M7 20.500h10" stroke="#707070" strokeDasharray="2 1" />
  </g>
);

type Task = { name: string; icon: React.ReactNode; open?: boolean; active?: boolean };

const tasks: Task[] = [
  { name: "PlusMinus", icon: <g><path d="M0 0h24v24H0z" fill="#f00" /><path d="M1 7h11M6.500 1v12M14 21h8" stroke="#000" strokeWidth="2" /></g> },
  {
    name: "File Explorer",
    open: true,
    icon: (
      <g>
        <path d="M1 3h9l2 3h11v16H1z" fill="#e0a010" />
        <path d="M1 6h22v15q0 1-1 1H2q-1 0-1-1z" fill="#ffd869" />
        <path d="M5 22v-7q0-2 2-2h10q2 0 2 2v7h-4v-4h-6v4z" fill="#3c8cd8" />
      </g>
    ),
  },
  {
    name: "This PC",
    icon: (
      <g>
        <path d="M7 1l15 3v13L7 13z" fill="#3aa0e8" stroke="#8aa0b0" />
        <path d="M8 3l13 3v4z" fill="#7cc8f8" />
        <path d="M6 14l14 4-5 4-14-4z" fill="#e4e8ec" stroke="#9aa4ac" />
        <path d="M5 17l10 3M8 15l9 3" stroke="#9aa4ac" />
      </g>
    ),
  },
  {
    name: "Outlook",
    icon: (
      <g>
        <path d="M3 9l10-8 11 8v12q0 2-2 2H5q-2 0-2-2z" fill="#1464b4" />
        <path d="M5 5l8-4 9 6v6l-9 5z" fill="#50b8f0" />
        <path d="M4 20l20-10v11q0 2-2 2H6z" fill="#28b8e8" />
        <rect y="5" width="13" height="13" rx="1" fill="#0f5cb0" />
        <circle cx="6.500" cy="11.500" r="3" fill="none" stroke="#fff" strokeWidth="2" />
      </g>
    ),
  },
  {
    name: "PS",
    icon: (
      <g>
        <path d="M0 0h24v24H0z" fill="#fff" />
        <path d="M2.500 1v21M1 21.500h22" stroke="#889" />
        <text x="3" y="12" fontSize="14" fontWeight="bold" fontFamily="Liberation Sans" fill="#60a8d8">PS</text>
        <path d="M3 20q3-6 6-4t5 3q3 0 7-5" fill="none" stroke="#203860" />
      </g>
    ),
  },
  {
    name: "Spectrum",
    icon: (
      <g>
        <path d="M1 13Q5-11 12 13z" fill="#e03020" />
        <path d="M4 13V4l3-2v11z" fill="#f0e820" />
        <path d="M6 13V2l3 3v8z" fill="#20b030" />
        <path d="M8 13V4l4 9z" fill="#2040d0" />
        <path d="M12 13q6 24 11 0z" fill="#2040c0" />
        <path d="M15 13h4v10h-2z" fill="#20b030" />
        <path d="M18 13h5q-2 9-5 10z" fill="#d02020" />
        <path d="M1 13Q5-11 12 13M12 13q6 24 11 0M0 13h24" fill="none" stroke="#111" />
      </g>
    ),
  },
  { name: "Calculator", icon: <Calculator /> },
  { name: "Tina 7", icon: <TinaSeven /> },
  {
    name: "Edge",
    open: true,
    icon: (
      <g>
        <circle cx="12" cy="12" r="12" fill="#1472c8" />
        <path d="M0 12a12 12 0 0124-1q0 6-6 6-4 0-3-3 0-6-6-6-6 0-9 4z" fill="#34b8d0" />
        <path d="M14 0q10 2 10 11 0 6-6 6-4 0-3-3 4-6-1-14z" fill="#4ccc90" />
        <path d="M9 9q-5 6 0 11 6 4 12 0-4 4-9 4Q1 23 0 12q3-4 9-3z" fill="#1460b8" />
        <path d="M12 10q-3 5 1 9 5 3 10-1l1-3q-4 3-8 1-2-1-1-3-1-3-3-3z" fill="#d3e1ec" />
      </g>
    ),
  },
  { name: "Tina 7", open: true, icon: <TinaSeven bolt /> },
  {
    name: "WinRAR",
    open: true,
    icon: (
      <g>
        <path d="M0 1h24v7H0z" fill="#a02838" />
        <path d="M0 9h24v7H0z" fill="#3050a0" />
        <path d="M0 17h24v7H0z" fill="#308040" />
        <path d="M8 1h8v23H8z" fill="#d88820" />
        <path d="M8.500 11.500h7v6h-7z" fill="#784010" stroke="#f0e8d8" />
        <path d="M12 1v8M12 19v5" stroke="#704010" strokeDasharray="2 1" />
      </g>
    ),
  },
  {
    name: "Media Player",
    open: true,
    icon: (
      <g>
        <circle cx="12" cy="12" r="11" fill="#303030" stroke="#f08050" strokeWidth="2" />
        <path d="M1 12a11 11 0 0021 5" fill="none" stroke="#9050c0" strokeWidth="2" />
        <path d="M9 6v12l9-6z" fill="#fff" />
      </g>
    ),
  },
  { name: "Tina 7", open: true, icon: <TinaSeven bolt /> },
  {
    name: "Paint",
    open: true,
    icon: (
      <g>
        <path d="M1 14Q3 3 13 3q9 1 9 8 0 4-5 4-3 1-2 4 0 4-5 4-9-1-9-9z" fill="#cfe6f8" stroke="#7aa8cc" />
        <circle cx="6" cy="12" r="2" fill="#e04040" />
        <circle cx="9" cy="8" r="2" fill="#f0a020" />
        <circle cx="14" cy="7" r="2" fill="#40a040" />
        <circle cx="6" cy="17" r="2" fill="#4060d0" />
        <path d="M20 5l2 1-6 16-3 3z" fill="#d88030" />
        <path d="M20 0h4l-2 6-2-1z" fill="#9c7050" />
      </g>
    ),
  },
  { name: "Tina", open: true, active: true, icon: null },
  { name: "Calculator", open: true, icon: <Calculator /> },
];

const Taskbar = () => (
  <footer className="flex h-10 bg-[#d3e1ec] font-['Open_Sans',sans-serif] text-[#111]">
    <button aria-label="Start" className="flex w-12 items-center justify-center">
      <svg width="16" height="16" viewBox="0 0 16 16">
        <path d="M0 2l7-1v7H0zM8 1l8-1v8H8zM0 9h7v6l-7-1zM8 9h8v7l-8-1z" />
      </svg>
    </button>
    <label className="flex w-72 items-center gap-[11px] border border-[#c8c8c8] bg-white pl-[11px]">
      <svg width="17" height="17" viewBox="0 0 17 17" fill="none" stroke="#222">
        <circle cx="10.500" cy="6.500" r="5.500" />
        <path d="M6.500 10.500L1 16" />
      </svg>
      <input
        aria-label="Search"
        placeholder="Type here to search"
        className="min-w-0 flex-1 text-[14px] outline-none placeholder:text-[#333]"
      />
    </label>
    <nav className="ml-[3px] flex flex-1 gap-px">
      {tasks.map((t, i) => (
        <button
          key={i}
          aria-label={t.name}
          className={clsx("relative flex w-12 items-center justify-center", t.active && "bg-[#eff4f8]")}
        >
          {t.active ? (
            <ScopeIcon size={24} />
          ) : (
            <svg width="24" height="25" viewBox="0 0 24 25">{t.icon}</svg>
          )}
          {t.open && (
            <span className={clsx("absolute bottom-0 h-[2px] bg-[#00cf69]", t.active ? "inset-x-0" : "inset-x-1")} />
          )}
        </button>
      ))}
    </nav>
    <div className="flex items-center text-[12px]">
      <svg width="64" height="18" viewBox="0 0 64 18" fill="none" stroke="#111">
        <path d="M1 12l6-6 6 6" />
        <path d="M23.500 7h3l4-4v12l-4-4h-3zM33 6q2 3 0 6M36 4q3 5 0 10" />
        <path d="M38 3q4 6 0 12" stroke="#999" />
        <path d="M51 15q1-9 12-11M54 15q1-6 9-8M57 15q1-4 6-5" />
        <circle cx="61.500" cy="14" r="1.500" fill="#111" />
      </svg>
      <span className="ml-2 w-[26px] text-center">ENG</span>
      <div className="ml-[10px] w-[52px] text-center leading-[18px]">
        <p className="whitespace-nowrap">4:49 PM</p>
        <p className="-mx-2 whitespace-nowrap">6/9/2025</p>
      </div>
      <svg width="26" height="26" viewBox="0 0 26 26" className="ml-5 mr-[9px]">
        <path d="M0 2h16v12h-5v4l-4-4H0z" fill="#000" />
        <path d="M3 5.500h10M3 8.500h10M3 11.500h6" stroke="#fff" />
        <circle cx="16" cy="17" r="8" fill="#c8ccd0" stroke="#888" />
        <text x="16" y="21" fontSize="12" textAnchor="middle" fill="#000">1</text>
      </svg>
    </div>
    <div className="w-[5px] border-l border-[#a0acb6]" />
  </footer>
);

/* ---------- page ---------- */

const menus = ["File", "Edit", "Insert", "View", "Analysis", "T&M", "Tools", "TI Utilities", "Help"];

export default function App() {
  const [tab, setTab] = useState("Basic");

  return (
    <div className="flex min-h-screen flex-col overflow-hidden bg-[#efefef] font-['Liberation_Sans',sans-serif] text-black">
      <header className="flex h-[23px] items-center bg-[#00cf69] pl-[2px] font-['Roboto',sans-serif] text-[12px]">
        <svg width="16" height="16" viewBox="0 0 16 16">
          <path d="M0 0h16v16H0z" fill="#c0c0c0" />
          <circle cx="8" cy="6" r="4.500" fill="none" stroke="#444" />
          <path d="M2 6h4M6.500 3v6M7 5l4-3M7 7l3 3M12 2v9M3 11h9" stroke="#222" fill="none" />
          <path d="M3 13h6v2H3z" fill="#008000" />
        </svg>
        <h1 className="ml-[5px] flex-1">Noname - Schematic Editor</h1>
        <svg width="121" height="12" viewBox="0 0 121 12" fill="none" stroke="#000">
          <path d="M0 4.500h10M45.500 2.500h7v7h-7zM47.500 2V.5h7v7H53M91 0l10 10M101 0l-10 10" />
        </svg>
      </header>

      <nav className="flex h-[18px] items-center gap-[13px] bg-white pl-[7px] pt-px font-['Roboto',sans-serif] text-[12px]">
        {menus.map((m) => (
          <button key={m} className={clsx("leading-none", m === "Analysis" && "text-[#888]")}>
            {m}
          </button>
        ))}
      </nav>

      <div className="mt-[2px] flex h-7 items-center border-b border-t border-b-[#a0a0a0] border-t-white pl-[5px] pr-[6px] font-['Roboto',sans-serif]">
        {fileTools.map((t) => <ToolButton key={t.name} tool={t} wide />)}
        <div className="ml-[4px] flex">{clipTools.map((t) => <ToolButton key={t.name} tool={t} wide />)}</div>
        <div className="ml-[7px] flex h-full items-center border-l border-[#a0a0a0] pl-[2px]">
          {drawTools.map((t) => <ToolButton key={t.name} tool={t} />)}
        </div>
        <div className="ml-2 flex">{editTools.map((t) => <ToolButton key={t.name} tool={t} />)}</div>
        <div className="ml-2 flex"><ToolButton tool={gridTool} /></div>
        <div className="ml-[6px] flex"><ToolButton tool={zoomTool} wide /></div>
        <Combo
          label="Zoom"
          value="100%"
          options={["50%", "100%", "200%"]}
          className="ml-[3px] w-[59px]"
          size="h-5 pl-[2px] text-[11px] leading-none"
        />
        <div className="ml-[9px] flex flex-1"><ToolButton tool={valueTool} wide /></div>
        <div className="flex h-full items-center border-l border-[#a0a0a0] pl-[5px]">
          <ToolButton tool={handTool} wide />
          <Combo
            label="Find component"
            value="Resistor"
            options={["Resistor", "Capacitor", "Inductor"]}
            className="ml-[5px] w-[149px]"
            size="h-5 pl-[2px] text-[11px] leading-none"
          />
        </div>
      </div>

      <div className="mt-[3px] flex h-[33px] pl-[5px] pr-[17px]">
        <button aria-label="Scroll left" className={clsx("flex w-3 items-center justify-center", RAISED)}>
          <svg width="6" height="20" viewBox="0 0 6 20" fill="none" stroke="#a0a0a0"><path d="M5 1L1 10l4 9" /></svg>
        </button>
        <div className="flex min-w-0 flex-1 overflow-hidden border-b border-t-2 border-b-white border-t-[#808080]">
          {Array.from({ length: 47 }, (_, i) => {
            const c = components[i];
            return (
              <div key={i} className={clsx("w-[33px] shrink-0", i < 46 && "border-r border-black")}>
                {c && (
                  <button
                    aria-label={c.name}
                    className={clsx(
                      "flex h-full w-full border-r",
                      c.name === "Resistor" ? "border-r-white bg-[#f4f4f4] shadow-[inset_0_2px_0_#a0a0a0]" : "border-l border-t border-l-white border-r-[#a0a0a0] border-t-white"
                    )}
                  >
                    <svg width="32" height="30" viewBox="1 1 32 30" className="shrink-0 overflow-visible">{c.icon}</svg>
                  </button>
                )}
              </div>
            );
          })}
        </div>
        <button aria-label="Scroll right" className={clsx("ml-[2px] flex w-3 items-center justify-center", RAISED)}>
          <svg width="6" height="20" viewBox="0 0 6 20" fill="#fff" stroke="#c0c0c0"><path d="M1 1l4 9-4 9z" /></svg>
        </button>
      </div>

      <div className="mt-[3px] flex h-[22px] items-start gap-px border-b border-t border-b-[#a0a0a0] border-t-white pl-1 font-['Roboto',sans-serif] text-[11px]">
        {componentTabs.map((t) => (
          <button
            key={t}
            onClick={() => setTab(t)}
            className={clsx(
              "border-b-2 border-l border-r-2 border-b-[#808080] border-l-white border-r-[#808080]",
              t === tab ? "h-[18px] pl-[5px] pr-[8px] pt-[2px]" : "h-[17px] px-[3px] pt-px"
            )}
          >
            <span className="block leading-[14px]">{t}</span>
          </button>
        ))}
      </div>

      <div className="flex flex-1">
        <main className="relative flex-1 overflow-hidden bg-white bg-[radial-gradient(circle_at_0.5px_0.5px,#b4b4b4_0.6px,transparent_0.8px)] bg-[length:8px_8px] bg-[position:0_6px]">
          <Schematic />
          <Oscilloscope />
        </main>
        <div className="mr-px flex w-[15px] flex-col items-center justify-between py-[6px]">
          <div className="flex w-full flex-col items-center gap-[9px]">
            <svg width="8" height="6" viewBox="0 0 8 6" fill="none" stroke="#555" strokeWidth="2"><path d="M1 5l3-3 3 3" /></svg>
            <div className="h-[42px] w-full bg-[#cdcdcd]" />
          </div>
          <svg width="8" height="6" viewBox="0 0 8 6" fill="none" stroke="#555" strokeWidth="2"><path d="M1 1l3 3 3-3" /></svg>
        </div>
      </div>

      <div className="flex h-[15px] items-center justify-between pl-[5px] pr-[21px]">
        <div className="flex h-full items-center gap-7">
          <svg width="6" height="8" viewBox="0 0 6 8" fill="none" stroke="#555" strokeWidth="2"><path d="M5 1L2 4l3 3" /></svg>
          <div className="h-full w-[245px] bg-[#cdcdcd]" />
        </div>
        <svg width="6" height="8" viewBox="0 0 6 8" fill="none" stroke="#555" strokeWidth="2"><path d="M1 1l3 3-3 3" /></svg>
      </div>
      <div className="flex h-[19px] items-start border-t border-white pl-[2px] font-['Roboto',sans-serif] text-[11px]">
        <button className="h-[17px] border-b-2 border-l border-r-2 border-b-[#808080] border-l-white border-r-[#808080] px-[5px] pt-px leading-4">
          Noname
        </button>
      </div>

      <div className="flex h-[26px] items-center border-b-2 border-t-2 border-b-[#a0a0a0] border-t-white pl-1 pr-[3px] font-['Roboto',sans-serif] text-[12px]">
        <button aria-label="Schematic view" className={clsx("flex h-[19px] w-6 items-center justify-center", PRESSED)}>
          <svg width="20" height="16" viewBox="0 0 20 16" fill="none" stroke="#000">
            <circle cx="9.500" cy="8" r="6" /><path d="M0 8.500h7M7.500 4v9M8 7l5-4M8 10l4 3M13 2h4v11M13 14h4" />
            <path d="M17 4v7" stroke="#808000" strokeWidth="3" />
          </svg>
        </button>
        <button aria-label="Oscilloscope" className="ml-[7px] h-[19px] w-6 border-b-2 border-r-2 border-black bg-[#008000]">
          <svg width="22" height="16" viewBox="0 0 22 16" fill="none">
            <path d="M1 5l3-3 5 5 4-5 4 5 4-4" stroke="#20ff20" />
            <path d="M1 13l2-2 2 2 2-2 2 2 2-2 2 2 2-2 2 2 2-2 2 2" stroke="#e0ffe0" />
          </svg>
        </button>
        <button className={clsx("ml-[3px] h-[19px] w-[25px] leading-none", RAISED)}>Exit</button>
        <div className="ml-1 h-[22px] flex-1 border-l border-t border-[#a0a0a0]" />
        <div className="ml-px h-[22px] w-[98px] border-l border-t border-[#a0a0a0] pl-[2px] leading-5">X: 703&nbsp; Y: 169</div>
      </div>

      <Taskbar />
    </div>
  );
}
